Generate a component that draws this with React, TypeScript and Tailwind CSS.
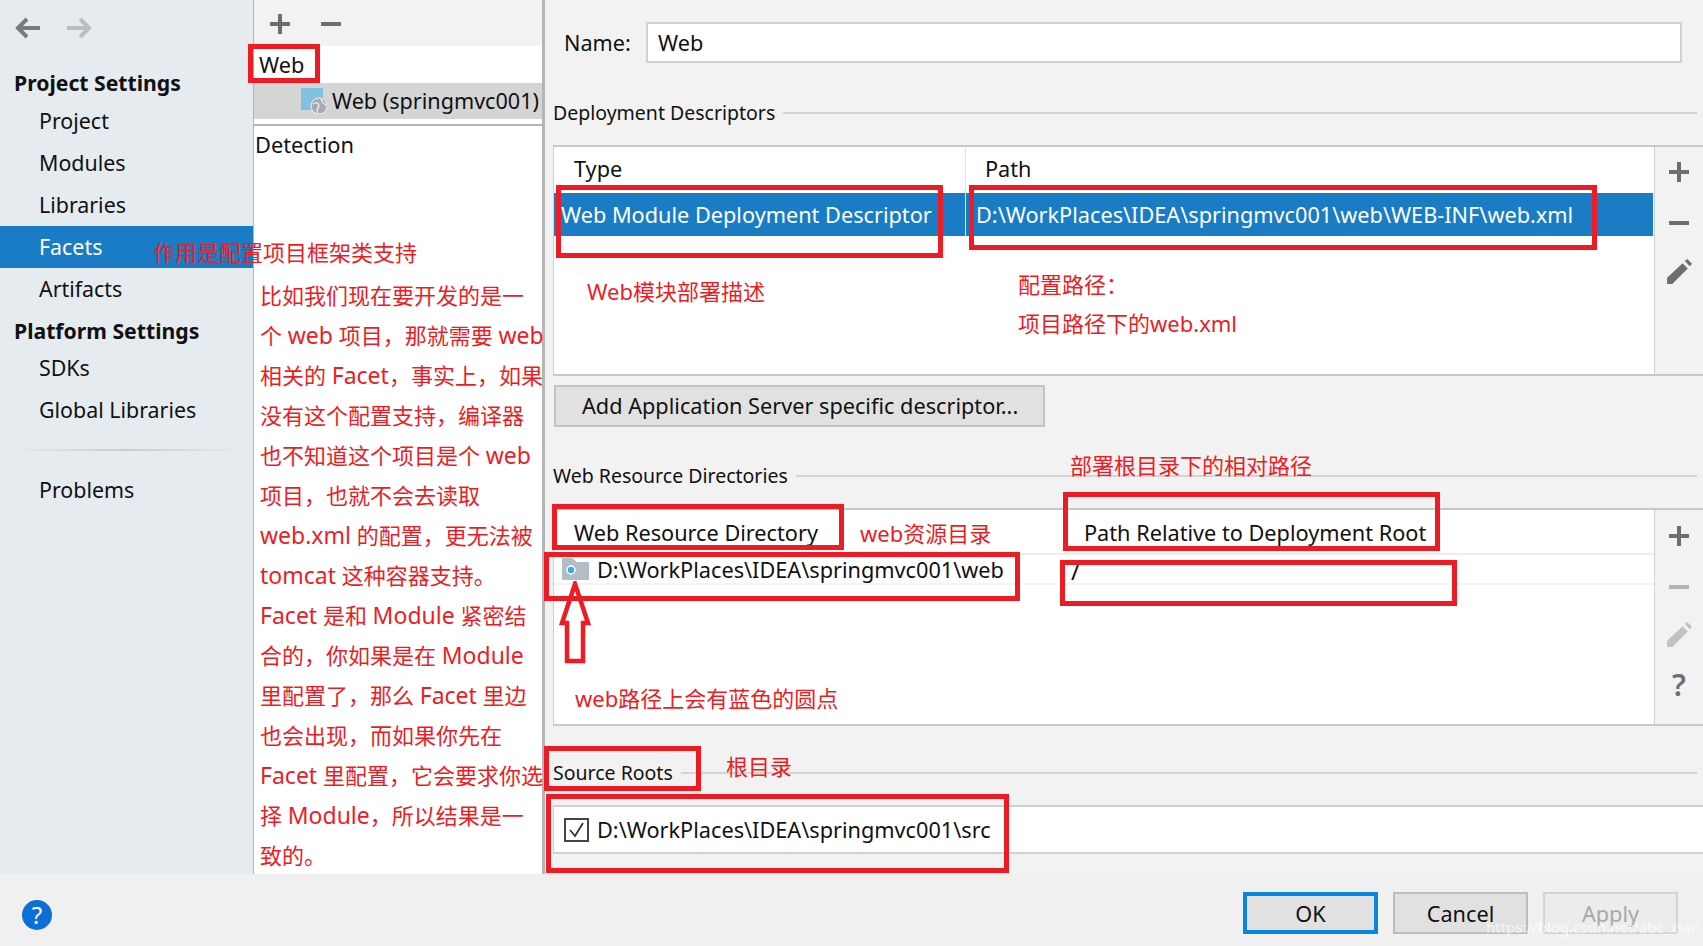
import { ReactNode } from "react";

const redText = "absolute whitespace-nowrap text-[22px] leading-[30px] text-[#ed1c24]";

function RedBox({ className }: { className: string }) {
  return <div className={`absolute border-[5px] border-[#ed1c24] ${className}`} />;
}

function Lat({ children }: { children: ReactNode }) {
  return <span className="text-[23px]">{children}</span>;
}

function NavItem({ label, active }: { label: string; active?: boolean }) {
  return (
    <div
      className={`h-[42px] flex items-center pl-[39px] text-[21.4px] ${
        active ? "bg-[#1a7cc4] text-white" : "text-[#111]"
      }`}
    >
      {label}
    </div>
  );
}

function Section({ title, className }: { title: string; className: string }) {
  return (
    <div className={`h-[28px] flex items-center gap-[8px] pr-[6px] ${className}`}>
      <span className="text-[19.5px] text-[#111] whitespace-nowrap">{title}</span>
      <div className="flex-1 h-[2px] bg-[#d4d4d4]" />
    </div>
  );
}

function Plus({ muted }: { muted?: boolean }) {
  return (
    <svg width="20" height="20" viewBox="0 0 20 20" fill={muted ? "#b5b5b5" : "#6e6e6e"}>
      <rect x="8" y="0" width="4" height="20" />
      <rect x="0" y="8" width="20" height="4" />
    </svg>
  );
}

function Minus({ muted }: { muted?: boolean }) {
  return (
    <svg width="20" height="20" viewBox="0 0 20 20" fill={muted ? "#b5b5b5" : "#6e6e6e"}>
      <rect x="0" y="8" width="20" height="4" />
    </svg>
  );
}

function Pencil({ muted }: { muted?: boolean }) {
  return (
    <svg width="27" height="27" viewBox="0 0 26 26" fill={muted ? "#c2c2c2" : "#6e6e6e"}>
      <path d="M1 19 L16 5 L21 10 L6 25 L1 25 Z" />
      <path d="M18 3 L20.5 1 L25 5.5 L23 8 Z" />
    </svg>
  );
}

function SideTools({ children, className }: { children: ReactNode; className: string }) {
  return (
    <div className={`w-[49px] bg-[#f2f2f2] border-l border-[#d0d0d0] flex flex-col items-center ${className}`}>
      {children}
    </div>
  );
}

export default function App() {
  return (
    <div className="relative w-[1703px] h-[946px] overflow-hidden flex flex-col bg-[#f0f0f0] text-[#111] font-['Noto_Sans','Noto_Sans_CJK_SC',sans-serif]">
      <div className="h-[874px] flex">
        {/* sidebar */}
        <div className="w-[253px] bg-[#e6ebf0] flex flex-col">
          <div className="h-[65px] flex items-start gap-[27px] pl-[15px] pt-[17px]">
            <svg width="25" height="22" viewBox="0 0 25 22" fill="none" stroke="#7a7a7a" strokeWidth="4">
              <path d="M25 11 H3 M12 2 L3 11 L12 20" />
            </svg>
            <svg width="25" height="22" viewBox="0 0 25 22" fill="none" stroke="#bdbdbd" strokeWidth="4">
              <path d="M0 11 H22 M13 2 L22 11 L13 20" />
            </svg>
          </div>
          <div className="h-[35px] flex items-center pl-[14px] text-[21.2px] font-bold">Project Settings</div>
          <NavItem label="Project" />
          <NavItem label="Modules" />
          <NavItem label="Libraries" />
          <NavItem label="Facets" active />
          <NavItem label="Artifacts" />
          <div className="h-[37px] pt-[4px] flex items-center pl-[14px] text-[21.2px] font-bold">Platform Settings</div>
          <NavItem label="SDKs" />
          <NavItem label="Global Libraries" />
          <div className="mt-[18px] mx-[10px] h-[2px] bg-linear-to-r from-[#e6ebf0] via-[#c8ccd0] to-[#e6ebf0]" />
          <div className="mt-[18px]">
            <NavItem label="Problems" />
          </div>
        </div>

        {/* facet tree */}
        <div className="w-[292px] bg-white border-l border-l-[#b5b5b5] border-r-[3px] border-r-[#b5b5b5] flex flex-col">
          <div className="h-[46px] bg-[#f2f2f2] flex items-center gap-[31px] pl-[16px] pt-[1px]">
            <Plus />
            <Minus />
          </div>
          <div className="h-[37px] flex items-center pl-[5px] pt-[2px] text-[21.7px]">Web</div>
          <div className="h-[36px] bg-[#d5d5d5] flex items-center pl-[47px] gap-[5px] text-[21.6px] whitespace-nowrap">
            <svg width="26" height="28" viewBox="0 0 26 28" className="shrink-0">
              <rect x="0" y="1" width="22" height="22" fill="#7fc1de" />
              <circle cx="18" cy="19" r="8" fill="#a5abb0" stroke="#f0f0f0" strokeWidth="1" />
              <path d="M12 17 Q17 14 18 19 Q15 24 17 26 M20 12 Q22 17 25 18" fill="none" stroke="#e8e8e8" strokeWidth="1.5" />
            </svg>
            <span className="pt-[1px]">Web (springmvc001)</span>
          </div>
          <div className="mt-[5px] h-[2px] bg-[#b5b5b5]" />
          <div className="pl-[1px] pt-[3px] text-[21.8px] leading-[32px]">Detection</div>
        </div>

        {/* facet form */}
        <div className="flex-1 min-w-0 bg-[#f2f2f2] pl-[8px] flex flex-col">
          <div className="mt-[22px] h-[41px] flex items-center">
            <span className="ml-[11px] w-[82px] pt-[2px] text-[21.6px]">Name:</span>
            <div className="w-[1036px] h-[41px] bg-white border-2 border-[#d0d0d0] flex items-center pl-[10px] pt-[2px] text-[21.7px]">
              Web
            </div>
          </div>

          <Section title="Deployment Descriptors" className="mt-[36px]" />
          <div className="mt-[18px] h-[231px] flex border-t-2 border-b-2 border-[#c8c8c8]">
            <div className="flex-1 bg-white border-l border-[#d0d0d0] flex flex-col">
              <div className="h-[46px] flex text-[21.7px]">
                <div className="w-[412px] border-r border-[#e2e2e2] flex items-end pl-[20px] pb-[7px]">Type</div>
                <div className="flex-1 flex items-end pl-[19px] pb-[7px]">Path</div>
              </div>
              <div className="h-[43px] mr-[1px] bg-[#1a7cc4] text-white flex text-[21.7px] whitespace-nowrap">
                <div className="w-[412px] border-r border-[#d8e6f2] flex items-center pl-[7px] pt-[2px]">
                  Web Module Deployment Descriptor
                </div>
                <div className="flex-1 flex items-center pl-[10px] pt-[2px]">D:\WorkPlaces\IDEA\springmvc001\web\WEB-INF\web.xml</div>
              </div>
            </div>
            <SideTools className="pt-[15px]">
              <Plus />
              <div className="mt-[31px]">
                <Minus />
              </div>
              <div className="mt-[25px]">
                <Pencil />
              </div>
            </SideTools>
          </div>

          <button className="mt-[9px] ml-[1px] w-[491px] h-[42px] bg-[#e1e1e1] border-2 border-[#c4c4c4] text-[21.7px] text-left pl-[26px] whitespace-nowrap">
            Add Application Server specific descriptor...
          </button>

          <Section title="Web Resource Directories" className="mt-[35px]" />
          <div className="mt-[18px] h-[218px] flex border-t-2 border-b-2 border-[#c8c8c8]">
            <div className="flex-1 bg-white border-l border-[#d0d0d0] flex flex-col">
              <div className="h-[45px] flex text-[21.7px] border-b-2 border-[#eeeeee]">
                <div className="w-[511px] flex items-end pl-[20px] pb-[3px]">Web Resource Directory</div>
                <div className="flex-1 flex items-end pl-[19px] pb-[3px]">Path Relative to Deployment Root</div>
              </div>
              <div className="h-[30px] flex text-[21.7px] border-b-2 border-[#f4f4f4] whitespace-nowrap">
                <div className="w-[511px] flex items-center pl-[8px] gap-[8px]">
                  <svg width="27" height="22" viewBox="0 0 27 22" className="shrink-0">
                    <path d="M0 0 H10 L15 4 H27 V22 H0 Z" fill="#b2bdc4" />
                    <circle cx="9" cy="12" r="4" fill="#3fa9e0" stroke="#ffffff" strokeWidth="1.5" />
                  </svg>
                  <span className="pt-[3px]">D:\WorkPlaces\IDEA\springmvc001\web</span>
                </div>
                <div className="flex-1 flex items-center pl-[6px] pt-[3px] text-[24px]">/</div>
              </div>
            </div>
            <SideTools className="pt-[16px]">
              <Plus />
              <div className="mt-[31px]">
                <Minus muted />
              </div>
              <div className="mt-[24px]">
                <Pencil muted />
              </div>
              <div className="mt-[20px] text-[30px] leading-[34px] font-semibold text-[#6e6e6e]">?</div>
            </SideTools>
          </div>

          <Section title="Source Roots" className="mt-[33px]" />
          <div className="mt-[18px] h-[49px] bg-white border-t-2 border-b-2 border-l border-[#d0d0d0] flex items-center pl-[10px] gap-[8px] text-[21.7px]">
            <svg width="25" height="24" viewBox="0 0 25 24" fill="none" className="shrink-0">
              <rect x="1" y="1" width="23" height="22" stroke="#444" strokeWidth="2" />
              <path d="M6 12 L11 18 L19 5" stroke="#333" strokeWidth="1.8" />
            </svg>
            <span className="pt-[2px]">D:\WorkPlaces\IDEA\springmvc001\src</span>
          </div>
        </div>
      </div>

      {/* dialog footer */}
      <div className="flex-1 flex items-start pt-[18px]">
        <div className="ml-[22px] mt-[8px] w-[30px] h-[30px] rounded-full bg-[#0a6fd6] flex items-center justify-center text-white text-[24px] leading-none">
          ?
        </div>
        <div className="ml-auto mr-[25px] flex gap-[15px] text-[21.7px]">
          <button className="w-[135px] h-[42px] pt-[2px] bg-[#e1e1e1] border-4 border-[#0a84e0]">OK</button>
          <button className="w-[135px] h-[42px] pt-[2px] bg-[#e1e1e1] border-2 border-[#bdbdbd]">Cancel</button>
          <button className="w-[135px] h-[42px] pt-[2px] bg-[#ececec] border-2 border-[#d4d4d4] text-[#a8a8a8]">Apply</button>
        </div>
      </div>

      {/* annotations drawn on top of the screenshot */}
      <RedBox className="left-[248px] top-[44px] w-[72px] h-[39px]" />
      <RedBox className="left-[556px] top-[185px] w-[387px] h-[73px]" />
      <RedBox className="left-[969px] top-[185px] w-[628px] h-[65px]" />
      <RedBox className="left-[552px] top-[504px] w-[292px] h-[46px]" />
      <RedBox className="left-[1063px] top-[492px] w-[377px] h-[59px]" />
      <RedBox className="left-[544px] top-[552px] w-[476px] h-[49px]" />
      <RedBox className="left-[1060px] top-[560px] w-[397px] h-[46px]" />
      <RedBox className="left-[544px] top-[746px] w-[157px] h-[45px]" />
      <RedBox className="left-[546px] top-[794px] w-[463px] h-[79px]" />

      <svg width="34" height="84" viewBox="0 0 34 84" fill="none" className="absolute left-[558px] top-[581px]">
        <path d="M17 3 L30 42 H25 V80 H9 V42 H4 Z" stroke="#ed1c24" strokeWidth="4.5" />
      </svg>

      <div className="absolute left-[260px] top-[275px] w-[283px] overflow-hidden text-[22px] leading-[40px] text-[#ed1c24] whitespace-nowrap">
        <div className="h-[40px]">比如我们现在要开发的是一</div>
        <div className="h-[40px]">个 <Lat>web</Lat> 项目，那就需要 <Lat>web</Lat></div>
        <div className="h-[40px]">相关的 <Lat>Facet</Lat>，事实上，如果</div>
        <div className="h-[40px]">没有这个配置支持，编译器</div>
        <div className="h-[40px]">也不知道这个项目是个 <Lat>web</Lat></div>
        <div className="h-[40px]">项目，也就不会去读取</div>
        <div className="h-[40px]"><Lat>web.xml</Lat> 的配置，更无法被</div>
        <div className="h-[40px]"><Lat>tomcat</Lat> 这种容器支持。</div>
        <div className="h-[40px]"><Lat>Facet</Lat> 是和 <Lat>Module</Lat> 紧密结</div>
        <div className="h-[40px]">合的，你如果是在 <Lat>Module</Lat></div>
        <div className="h-[40px]">里配置了，那么 <Lat>Facet</Lat> 里边</div>
        <div className="h-[40px]">也会出现，而如果你先在</div>
        <div className="h-[40px]"><Lat>Facet</Lat> 里配置，它会要求你选</div>
        <div className="h-[40px]">择 <Lat>Module</Lat>，所以结果是一</div>
        <div className="h-[40px]">致的。</div>
      </div>

      <span className={`${redText} left-[153px] top-[237px]`}>作用是配置项目框架类支持</span>
      <span className={`${redText} left-[587px] top-[276px]`}>Web模块部署描述</span>
      <span className={`${redText} left-[1018px] top-[269px]`}>配置路径：</span>
      <span className={`${redText} left-[1018px] top-[308px]`}>项目路径下的web.xml</span>
      <span className={`${redText} left-[1070px] top-[450px]`}>部署根目录下的相对路径</span>
      <span className={`${redText} left-[860px] top-[518px]`}>web资源目录</span>
      <span className={`${redText} left-[575px] top-[683px]`}>web路径上会有蓝色的圆点</span>
      <span className={`${redText} left-[726px] top-[751px]`}>根目录</span>

      <span className="absolute left-[1486px] top-[916px] text-[15px] leading-[22px] text-white/70 whitespace-nowrap">
        https://blog.csdn.net/abc_xian
      </span>
    </div>
  );
}
